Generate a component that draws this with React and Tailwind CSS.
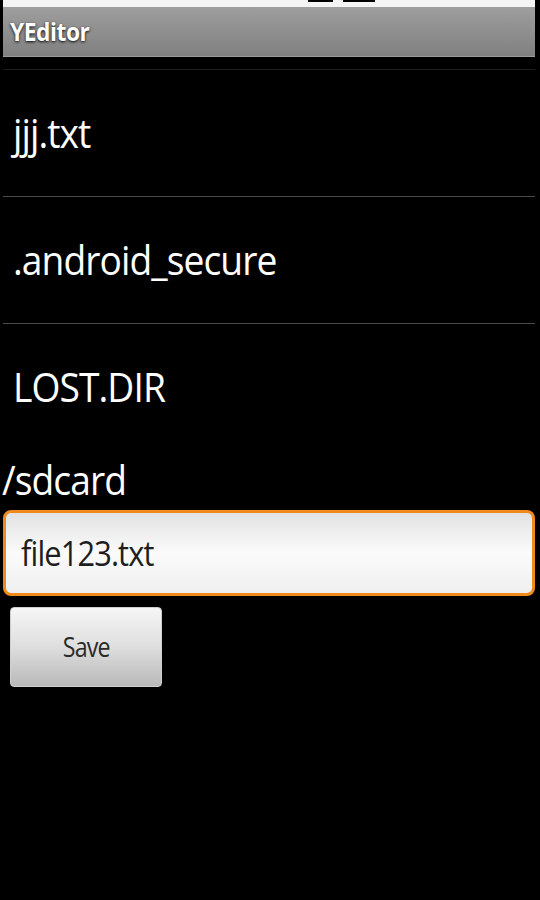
import React from "react";

const font = { fontFamily: '"Open Sans", "DejaVu Sans", sans-serif' };

export default function App() {
  return (
    <div className="w-[540px] h-[900px] bg-black overflow-hidden flex flex-col" style={font}>
      <div className="ml-[3px] mr-[5px] h-[7px] bg-[#f4f4f4] relative">
        <div className="absolute left-[305px] top-0 w-[25px] h-[2px] bg-black" />
        <div className="absolute left-[340px] top-0 w-[32px] h-[2px] bg-black" />
      </div>
      <div className="ml-[3px] mr-[5px] h-[50px] bg-gradient-to-b from-[#9e9e9e] to-[#808080] flex items-center pl-[7px] border-b border-[#9a9a9a]">
        <span className="inline-block origin-left scale-x-[0.91] text-white font-bold text-[25px] tracking-[-0.5px] [text-shadow:0_1px_3px_#000]">YEditor</span>
      </div>
      <div className="h-[12px]" />
      <div className="ml-[3px] mr-[5px] h-px bg-[#1e1e1e]" />
      <div className="flex flex-col">
        {["jjj.txt", ".android_secure", "LOST.DIR"].map((t, i) => (
          <div key={t} className="flex flex-col">
            <div className="h-[126px] flex items-center pl-[13px] text-white text-[40px] tracking-[-1px]">
              <span className="inline-block origin-left scale-x-[0.93]">{t}</span>
            </div>
            {i < 2 && <div className="ml-[3px] mr-[5px] h-px bg-[#4a4a4a]" />}
          </div>
        ))}
      </div>
      <div className="h-[60px] flex items-center pl-[2px] text-white text-[40px] tracking-[-1px]">
        <span className="inline-block origin-left scale-x-[0.93]">/sdcard</span>
      </div>
      <div className="ml-[3px] mr-[5px] h-[86px] rounded-[8px] border-[3px] border-[#f08a1c] bg-gradient-to-b from-[#e2e2e2] via-[#fbfbfb] to-[#efefef] flex items-center pl-[15px] text-[#1e1e1e] text-[35px] tracking-[-1px]">
        <span className="inline-block origin-left scale-x-[0.88]">file123.txt</span>
      </div>
      <div className="mt-[11px] ml-[10px] w-[152px] h-[80px] rounded-[4px] bg-gradient-to-b from-[#f6f6f6] via-[#dedede] to-[#b9b9b9] border border-[#cfcfcf] flex items-center justify-center text-[#2a2a2a] text-[27px] tracking-[-1px]">
        <span className="inline-block scale-x-[0.86]">Save</span>
      </div>
    </div>
  );
}
